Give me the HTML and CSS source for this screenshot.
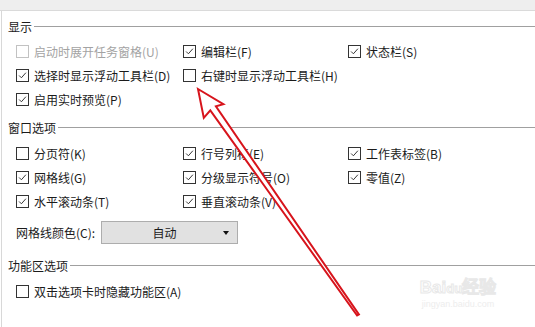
FILE: index.html
```html
<!DOCTYPE html>
<html lang="zh-CN">
<head>
<meta charset="utf-8">
<link rel="stylesheet" href="styles.css">
</head>
<body>
<div class="topbar"></div>
<div class="panel">
  <section class="group first">
    <div class="group-title"><span>显示</span></div>
    <div class="grid">
      <div class="cb disabled"><span class="box"></span>启动时展开任务窗格(U)</div>
      <div class="cb"><span class="box"><svg viewBox="0 0 13 13"><path d="M2.5 6.5 L5.2 9.2 L10.5 3.2"/></svg></span>编辑栏(F)</div>
      <div class="cb"><span class="box"><svg viewBox="0 0 13 13"><path d="M2.5 6.5 L5.2 9.2 L10.5 3.2"/></svg></span>状态栏(S)</div>
      <div class="cb"><span class="box"><svg viewBox="0 0 13 13"><path d="M2.5 6.5 L5.2 9.2 L10.5 3.2"/></svg></span>选择时显示浮动工具栏(D)</div>
      <div class="cb"><span class="box"></span>右键时显示浮动工具栏(H)</div>
      <div></div>
      <div class="cb"><span class="box"><svg viewBox="0 0 13 13"><path d="M2.5 6.5 L5.2 9.2 L10.5 3.2"/></svg></span>启用实时预览(P)</div>
    </div>
  </section>
  <section class="group second">
    <div class="group-title"><span>窗口选项</span></div>
    <div class="grid">
      <div class="cb"><span class="box"></span>分页符(K)</div>
      <div class="cb"><span class="box"><svg viewBox="0 0 13 13"><path d="M2.5 6.5 L5.2 9.2 L10.5 3.2"/></svg></span>行号列标(E)</div>
      <div class="cb"><span class="box"><svg viewBox="0 0 13 13"><path d="M2.5 6.5 L5.2 9.2 L10.5 3.2"/></svg></span>工作表标签(B)</div>
      <div class="cb"><span class="box"><svg viewBox="0 0 13 13"><path d="M2.5 6.5 L5.2 9.2 L10.5 3.2"/></svg></span>网格线(G)</div>
      <div class="cb"><span class="box"><svg viewBox="0 0 13 13"><path d="M2.5 6.5 L5.2 9.2 L10.5 3.2"/></svg></span>分级显示符号(O)</div>
      <div class="cb"><span class="box"><svg viewBox="0 0 13 13"><path d="M2.5 6.5 L5.2 9.2 L10.5 3.2"/></svg></span>零值(Z)</div>
      <div class="cb"><span class="box"><svg viewBox="0 0 13 13"><path d="M2.5 6.5 L5.2 9.2 L10.5 3.2"/></svg></span>水平滚动条(T)</div>
      <div class="cb"><span class="box"><svg viewBox="0 0 13 13"><path d="M2.5 6.5 L5.2 9.2 L10.5 3.2"/></svg></span>垂直滚动条(V)</div>
    </div>
    <div class="color-row">
      <span class="color-label">网格线颜色(C):</span>
      <div class="dropdown"><span class="dd-text">自动</span><span class="dd-arrow"></span></div>
    </div>
  </section>
  <section class="group third">
    <div class="group-title"><span>功能区选项</span></div>
    <div class="grid">
      <div class="cb wide"><span class="box"></span>双击选项卡时隐藏功能区(A)</div>
    </div>
  </section>
</div>
<svg class="arrow" width="535" height="327" viewBox="0 0 535 327">
  <polygon points="198,89 223.4,104.1 215.9,106.3 358.9,314.5 357.1,315.5 210.3,110.3 203.8,117.9"/>
</svg>
<div class="watermark">
  <div class="wm-main">Bai<span class="wm-du">du</span>经验</div>
  <div class="wm-url">jingyan.baidu.com</div>
</div>
</body>
</html>
```
FILE: styles.css
```css
html, body {
  margin: 0;
  padding: 0;
  background: #ffffff;
}
body {
  width: 535px;
  height: 327px;
  overflow: hidden;
  position: relative;
  font-family: "Microsoft YaHei", "Noto Sans CJK SC", sans-serif;
  font-size: 12px;
  color: #1b1b1b;
}
.topbar {
  height: 10px;
  background: #eeeeee;
  border-bottom: 1px solid #dadada;
}
.panel {
  margin-left: 1px;
  border-left: 1px solid #d8d8d8;
  padding-top: 5px;
  height: 311px;
}
.group-title {
  display: flex;
  align-items: center;
  height: 20px;
  padding-left: 6px;
}
.group-title::after {
  content: "";
  flex: 1;
  height: 1px;
  background: #a0a0a0;
  margin-left: 2px;
}
.grid {
  display: grid;
  grid-template-columns: 167px 165px 1fr;
  grid-auto-rows: 24px;
  padding-left: 14px;
  margin-top: 3px;
}
.cb {
  display: flex;
  align-items: center;
  white-space: nowrap;
}
.cb.wide {
  grid-column: 1 / 4;
}
.box {
  width: 13px;
  height: 13px;
  box-sizing: border-box;
  border: 1px solid #333333;
  background: #ffffff;
  margin-right: 5px;
  flex: none;
  display: flex;
}
.box svg {
  width: 11px;
  height: 11px;
}
.box path {
  fill: none;
  stroke: #2a2a2a;
  stroke-width: 1.1;
}
.cb.disabled {
  color: #a3a3a3;
}
.cb.disabled .box {
  border-color: #c2c2c2;
}
.second {
  margin-top: 6px;
}
.second .grid {
  margin-top: 4px;
}
.color-row {
  display: flex;
  align-items: center;
  padding-left: 14px;
  margin-top: 8px;
  height: 23px;
}
.color-label {
  width: 85px;
}
.dropdown {
  width: 137px;
  height: 23px;
  box-sizing: border-box;
  border: 1px solid #adadad;
  background: #e1e1e1;
  display: flex;
  align-items: center;
}
.dd-text {
  flex: 1;
  text-align: center;
  padding-left: 4px;
}
.dd-arrow {
  width: 0;
  height: 0;
  border-left: 3px solid transparent;
  border-right: 3px solid transparent;
  border-top: 4px solid #111111;
  margin-right: 8px;
}
.third {
  margin-top: 11px;
}
.third .grid {
  margin-top: 4px;
}
.arrow {
  position: absolute;
  left: 0;
  top: 0;
  pointer-events: none;
}
.arrow polygon {
  fill: #ffffff;
  stroke: #d7141c;
  stroke-width: 2;
  stroke-linejoin: miter;
}
.watermark {
  position: absolute;
  left: 410px;
  top: 279px;
  width: 96px;
  text-align: center;
  font-family: "Liberation Sans", sans-serif;
  color: #ffffff;
}
.wm-main {
  font-size: 17px;
  font-weight: bold;
  -webkit-text-stroke: 1px #e8e8e8;
  line-height: 18px;
}
.wm-du {
  font-size: 13px;
}
.wm-url {
  font-size: 9px;
  color: #ededed;
  line-height: 12px;
}
```
